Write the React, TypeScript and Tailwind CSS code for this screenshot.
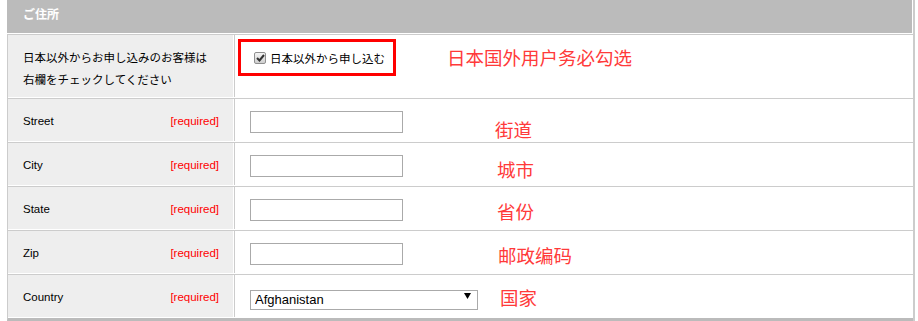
import React from "react";

const latin = "font-['Liberation_Sans','Noto_Sans_CJK_JP',sans-serif]";
const cjk = "font-['Noto_Sans_CJK_JP','Liberation_Sans',sans-serif]";
const zh = "font-['Noto_Sans_CJK_SC',sans-serif]";

function Note({ text, cls }: { text: string; cls: string }) {
  return (
    <span className={`${zh} text-[18.5px] leading-[24px] text-[#ff3a3a] whitespace-nowrap ${cls}`}>
      {text}
    </span>
  );
}

function FieldRow({
  label,
  note,
  noteCls,
  last,
  select,
}: {
  label: string;
  note: string;
  noteCls: string;
  last?: boolean;
  select?: boolean;
}) {
  return (
    <div
      className={`flex bg-white border-l border-[#ccc] pr-px pb-px ${
        last ? "border-b-[3px] border-b-[#bbb]" : "border-b border-b-[#ccc]"
      }`}
    >
      <div className="w-[225px] h-[42px] bg-[#eeeeee] flex items-center justify-between pl-[15px] pr-[14px] pt-[3px] mr-px">
        <span className={`${latin} text-[11.5px] text-black`}>{label}</span>
        <span className={`${latin} text-[11.5px] text-[#ff0000]`}>[required]</span>
      </div>
      <div className="flex-1 h-[42px] border-l border-[#ccc] bg-white flex items-start pl-[15px]">
        {select ? (
          <div className="relative mt-[11px] w-[228px] h-[20px]">
            <select
              defaultValue="Afghanistan"
              className={`${latin} appearance-none w-full h-full border border-[#aaa] bg-white text-[13px] leading-[18px] text-black pl-[4px] pr-[20px] outline-none`}
            >
              <option>Afghanistan</option>
              <option>Albania</option>
              <option>Algeria</option>
            </select>
            <svg
              className="absolute right-[7px] top-[7px] pointer-events-none"
              width="7"
              height="6"
              viewBox="0 0 7 6"
            >
              <path d="M0 0 H7 L3.5 6 Z" fill="#000" />
            </svg>
          </div>
        ) : (
          <input
            type="text"
            className="mt-[12px] w-[153px] h-[22px] border border-[#aaa] bg-white outline-none"
          />
        )}
        <Note text={note} cls={noteCls} />
      </div>
    </div>
  );
}

export default function App() {
  return (
    <div className="w-[918px] h-[321px] bg-white overflow-hidden flex">
      <div className="ml-[7px] w-[908px] flex flex-col border-r-2 border-[#ccc] bg-white">
        {/* header */}
        <div className="pr-px pb-px border-b border-[#ccc] bg-white">
          <div className="h-[33px] bg-[#bbbbbb] flex items-start pt-[6px] pl-[16px]">
            <span className={`${cjk} text-[12px] leading-[16px] font-bold text-white`}>ご住所</span>
          </div>
        </div>

        {/* overseas row */}
        <div className="flex bg-white border-l border-[#ccc] pr-px pb-px border-b border-b-[#ccc]">
          <div className="w-[225px] h-[62px] bg-[#eeeeee] pl-[15px] pt-[11px] mr-px">
            <p className={`${cjk} text-[11.5px] leading-[22px] text-black`}>
              日本以外からお申し込みのお客様は
              <br />
              右欄をチェックしてください
            </p>
          </div>
          <div className="flex-1 h-[62px] border-l border-[#ccc] bg-white flex items-start">
            <label className="ml-[3px] mt-[4px] w-[158px] h-[37px] border-[3px] border-[#ff0000] flex items-center pl-[13px]">
              <span className="w-[12px] h-[12px] rounded-[2px] border border-[#8f8f8f] bg-gradient-to-b from-[#f4f4f4] to-[#cfcfcf] flex items-center justify-center">
                <svg width="9" height="8" viewBox="0 0 9 8">
                  <path d="M1 4 L3.5 6.5 L8 1" stroke="#333" strokeWidth="2" fill="none" />
                </svg>
              </span>
              <span className={`${cjk} ml-[4px] text-[11.5px] leading-[16px] text-black whitespace-nowrap`}>
                日本以外から申し込む
              </span>
            </label>
            <Note text="日本国外用户务必勾选" cls="ml-[51px] mt-[10px]" />
          </div>
        </div>

        <FieldRow label="Street" note="街道" noteCls="ml-[92px] mt-[18px]" />
        <FieldRow label="City" note="城市" noteCls="ml-[94px] mt-[14px]" />
        <FieldRow label="State" note="省份" noteCls="ml-[94px] mt-[12px]" />
        <FieldRow label="Zip" note="邮政编码" noteCls="ml-[95px] mt-[12px]" />
        <FieldRow label="Country" note="国家" noteCls="ml-[22px] mt-[10px]" last select />
      </div>
    </div>
  );
}
